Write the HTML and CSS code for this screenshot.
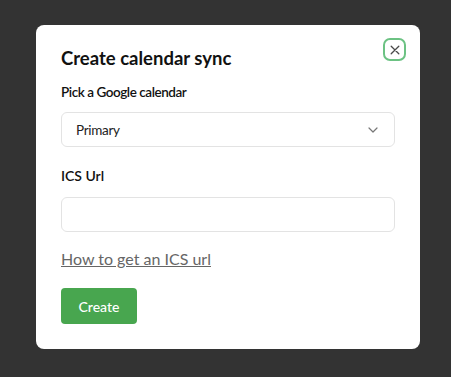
FILE: index.html
```html
<!DOCTYPE html>
<html>
<head>
<meta charset="utf-8">
<link rel="stylesheet" href="styles.css">
</head>
<body>
<div class="modal">
  <button class="close" aria-label="Close">
    <svg width="10" height="10" viewBox="0 0 10 10"><path d="M1.2 1.2L8.8 8.8M8.8 1.2L1.2 8.8" stroke="#4a4a4a" stroke-width="1.3" fill="none" stroke-linecap="round"/></svg>
  </button>
  <h2 class="title">Create calendar sync</h2>
  <label class="label">Pick a Google calendar</label>
  <div class="select">
    <span>Primary</span>
    <svg width="10" height="6" viewBox="0 0 10 6"><path d="M1 1L5 5L9 1" stroke="#777" stroke-width="1.2" fill="none" stroke-linecap="round" stroke-linejoin="round"/></svg>
  </div>
  <label class="label second">ICS Url</label>
  <div class="input"></div>
  <a class="link" href="#">How to get an ICS url</a>
  <button class="create">Create</button>
</div>
</body>
</html>
```
FILE: styles.css
```css
html, body {
  margin: 0;
  padding: 0;
  background: #333333;
  width: 451px;
  height: 377px;
  overflow: hidden;
}
body {
  font-family: "Lato", "Open Sans", sans-serif;
  padding-top: 25px;
  padding-left: 36px;
  box-sizing: border-box;
}
.modal {
  position: relative;
  width: 384px;
  height: 324px;
  background: #fff;
  border-radius: 8px;
  box-sizing: border-box;
  padding: 22px 25px 0 25px;
  display: flex;
  flex-direction: column;
  align-items: flex-start;
}
.close {
  position: absolute;
  top: 13px;
  right: 14px;
  width: 23px;
  height: 23px;
  border: 2px solid #6cc283;
  border-radius: 7px;
  background: #fff;
  padding: 0;
  display: flex;
  align-items: center;
  justify-content: center;
}
.title {
  margin: 0;
  font-size: 18.5px;
  font-weight: 700;
  color: #111;
  line-height: 22px;
}
.label {
  margin-top: 14px;
  font-size: 13.5px;
  font-weight: 600;
  color: #111;
  line-height: 18px;
  letter-spacing: -0.45px;
}
.label.second {
  margin-top: 20px;
  font-size: 14px;
  letter-spacing: 0;
}
.select {
  margin-top: 11px;
  width: 334px;
  height: 35px;
  box-sizing: border-box;
  border: 1px solid #e3e3e3;
  border-radius: 6px;
  display: flex;
  align-items: center;
  justify-content: space-between;
  padding: 0 16px 0 14px;
  font-size: 13.5px;
  letter-spacing: -0.3px;
  color: #222;
}
.input {
  margin-top: 12px;
  width: 334px;
  height: 35px;
  box-sizing: border-box;
  border: 1px solid #e3e3e3;
  border-radius: 6px;
}
.link {
  margin-top: 17px;
  font-size: 16px;
  color: #666;
  text-decoration: underline;
  line-height: 20px;
}
.create {
  margin-top: 19px;
  width: 76px;
  height: 36px;
  background: #48a64f;
  color: #fff;
  border: none;
  border-radius: 4px;
  font-family: inherit;
  font-size: 14px;
  font-weight: 500;
  padding: 0;
}
```
